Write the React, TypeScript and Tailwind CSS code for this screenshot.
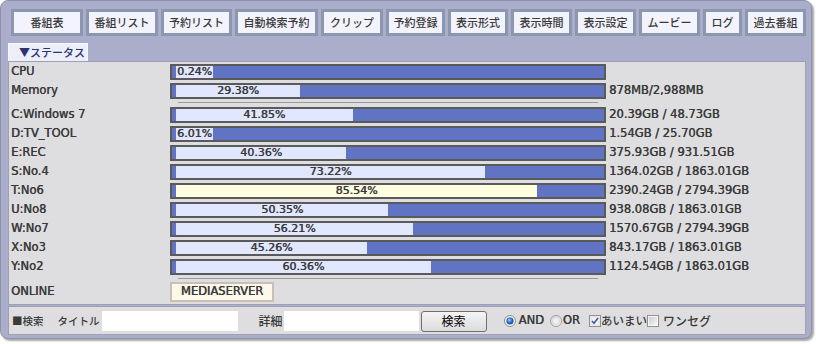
import React from "react";

const LAT = { fontFamily: "'DejaVu Sans', Verdana, sans-serif" } as const;
const JP = { fontFamily: "'Noto Sans CJK JP', sans-serif" } as const;

const NAV: [string, string][] = [
  ["番組表", "w-[72px]"],
  ["番組リスト", "w-[72px]"],
  ["予約リスト", "w-[71px]"],
  ["自動検索予約", "w-[83px]"],
  ["クリップ", "w-[62px]"],
  ["予約登録", "w-[59px]"],
  ["表示形式", "w-[60px]"],
  ["表示時間", "w-[61px]"],
  ["表示設定", "w-[61px]"],
  ["ムービー", "w-[61px]"],
  ["ログ", "w-[39px]"],
  ["過去番組", "w-[61px]"],
];

type Row = { label: string; pct: number; value: string };

const TOP: Row[] = [
  { label: "CPU", pct: 0.24, value: "" },
  { label: "Memory", pct: 29.38, value: "878MB/2,988MB" },
];

const DRIVES: Row[] = [
  { label: "C:Windows 7", pct: 41.85, value: "20.39GB / 48.73GB" },
  { label: "D:TV_TOOL", pct: 6.01, value: "1.54GB / 25.70GB" },
  { label: "E:REC", pct: 40.36, value: "375.93GB / 931.51GB" },
  { label: "S:No.4", pct: 73.22, value: "1364.02GB / 1863.01GB" },
  { label: "T:No6", pct: 85.54, value: "2390.24GB / 2794.39GB" },
  { label: "U:No8", pct: 50.35, value: "938.08GB / 1863.01GB" },
  { label: "W:No7", pct: 56.21, value: "1570.67GB / 2794.39GB" },
  { label: "X:No3", pct: 45.26, value: "843.17GB / 1863.01GB" },
  { label: "Y:No2", pct: 60.36, value: "1124.54GB / 1863.01GB" },
];

function BarRow({ row }: { row: Row }) {
  const warn = row.pct >= 80;
  return (
    <div
      className="flex h-[19px] items-center text-[11.5px] text-[#3a3a3a] [text-shadow:0.4px_0_0_currentColor]"
      style={LAT}
    >
      <div className="w-[160px] pl-[1px] leading-[19px]">{row.label}</div>
      <div className="h-[16px] w-[436px] border-2 border-[#5a5a5a] bg-[#6174c4] pl-[4px]">
        <div
          className={`h-full min-w-fit whitespace-nowrap px-[1px] text-center text-[11px] leading-[12px] ${
            warn ? "bg-[#fffde0]" : "bg-[#e1e7fe]"
          }`}
          style={{ width: `${(row.pct / 100) * 422}px` }}
        >
          {row.pct.toFixed(2)}%
        </div>
      </div>
      <div className="ml-[3px] whitespace-nowrap">{row.value}</div>
    </div>
  );
}

function Sep({ h }: { h: string }) {
  return (
    <div className={`flex ${h} items-center`}>
      <div className="ml-[168px] h-px w-[420px] bg-[#9a9a9a]" />
    </div>
  );
}

function RadioOn() {
  return (
    <svg width="12" height="12" viewBox="0 0 13 13">
      <defs>
        <linearGradient id="rg1" x1="0" y1="0" x2="1" y2="1">
          <stop offset="0" stopColor="#e4e4e4" />
          <stop offset="1" stopColor="#fbfbfb" />
        </linearGradient>
        <radialGradient id="rg2" cx="0.4" cy="0.35" r="0.7">
          <stop offset="0" stopColor="#9fd3ff" />
          <stop offset="0.5" stopColor="#2d7fdc" />
          <stop offset="1" stopColor="#124f9e" />
        </radialGradient>
      </defs>
      <circle cx="6.5" cy="6.5" r="6" fill="url(#rg1)" stroke="#8a8a8a" />
      <circle cx="6.5" cy="6.5" r="3.6" fill="url(#rg2)" stroke="#1d4d8c" strokeWidth="0.6" />
    </svg>
  );
}

function RadioOff() {
  return (
    <svg width="12" height="12" viewBox="0 0 13 13">
      <defs>
        <linearGradient id="rg3" x1="0" y1="0" x2="1" y2="1">
          <stop offset="0" stopColor="#d6d6d6" />
          <stop offset="1" stopColor="#f8f8f8" />
        </linearGradient>
      </defs>
      <circle cx="6.5" cy="6.5" r="6" fill="url(#rg3)" stroke="#9a9a9a" />
      <circle cx="6.5" cy="6.5" r="3.8" fill="#f0f0f0" stroke="#c8c8c8" strokeWidth="0.6" />
    </svg>
  );
}

function CheckOn() {
  return (
    <svg width="12" height="12" viewBox="0 0 13 13">
      <rect x="0.5" y="0.5" width="12" height="12" fill="#fdfdfd" stroke="#8a8a8a" />
      <rect x="2" y="2" width="9" height="9" fill="#f4f4f4" stroke="#d2d2d2" strokeWidth="0.8" />
      <path d="M3.2 6.6 L5.4 9 L9.8 3.2" fill="none" stroke="#3b5a9e" strokeWidth="1.7" />
    </svg>
  );
}

function CheckOff() {
  return (
    <svg width="12" height="12" viewBox="0 0 13 13">
      <defs>
        <linearGradient id="cg1" x1="0" y1="0" x2="1" y2="1">
          <stop offset="0" stopColor="#cfcfcf" />
          <stop offset="1" stopColor="#f6f6f6" />
        </linearGradient>
      </defs>
      <rect x="0.5" y="0.5" width="12" height="12" fill="#fafafa" stroke="#8a8a8a" />
      <rect x="2" y="2" width="9" height="9" fill="url(#cg1)" />
    </svg>
  );
}

export default function App() {
  return (
    <div className="h-[344px] w-[816px] bg-white">
      <div className="w-[812px] rounded-[8px] border border-[#8e92ac] bg-[#aaaecb] pb-[3px] pl-[7px] pr-[4px] pt-[8px] shadow-[2px_2px_2px_rgba(0,0,0,0.35)]">
        {/* nav */}
        <div className="ml-[3px] flex gap-[3px]" style={JP}>
          {NAV.map(([t, w]) => (
            <div
              key={t}
              className={`${w} flex h-[27px] items-center justify-center border-[3px] border-[#8a97ae] bg-[#f2f3fd] text-[11px] font-medium text-[#3a3a3a]`}
            >
              {t}
            </div>
          ))}
        </div>

        {/* tab */}
        <div
          className="mt-[7px] flex h-[18px] w-[80px] items-center border border-b-0 border-[#f6f7ff] bg-[#eceefa] pl-[10px] text-[11px] font-medium text-[#2b3470]"
          style={JP}
        >
          ▼ステータス
        </div>

        {/* status panel */}
        <div className="w-[798px] border border-[#9ea0b6] bg-[#dedee0] pl-[1px]">
          {TOP.map((r) => (
            <BarRow key={r.label} row={r} />
          ))}
          <Sep h="h-[5px]" />
          {DRIVES.map((r) => (
            <BarRow key={r.label} row={r} />
          ))}
          <Sep h="h-[4px]" />
          <div
            className="flex h-[24px] items-center text-[11.5px] text-[#3a3a3a] [text-shadow:0.4px_0_0_currentColor]"
            style={LAT}
          >
            <div className="w-[160px] pl-[1px]">ONLINE</div>
            <div className="flex h-[20px] w-[104px] items-center justify-center border-2 border-[#cac1b6] bg-[#fdf8e9]">
              MEDIASERVER
            </div>
          </div>
        </div>

        {/* search panel */}
        <div
          className="mt-[1px] flex h-[29px] w-[798px] items-center border border-[#9ea0b6] bg-[#dedee0] pl-[3px] pt-[1px] text-[12px] text-[#3a3a3a]"
          style={JP}
        >
          <span className="text-[10.5px] font-medium">■検索</span>
          <span className="ml-[14px] text-[10.5px] font-medium">タイトル</span>
          <div className="ml-[2px] h-[20px] w-[136px] bg-white" />
          <span className="ml-[21px] font-medium">詳細</span>
          <div className="ml-[1px] h-[20px] w-[135px] bg-white" />
          <div className="ml-[2px] flex h-[21px] w-[66px] items-center justify-center rounded-[3px] border border-[#707070] bg-gradient-to-b from-[#f4f4f4] to-[#dcdcdc] text-[12px] text-black">
            検索
          </div>
          <div className="ml-[17px] flex items-center">
            <RadioOn />
          </div>
          <span
            className="ml-[3px] text-[11.5px] [text-shadow:0.4px_0_0_currentColor]"
            style={LAT}
          >
            AND
          </span>
          <div className="ml-[6px] flex items-center">
            <RadioOff />
          </div>
          <span
            className="ml-[1px] text-[11.5px] [text-shadow:0.4px_0_0_currentColor]"
            style={LAT}
          >
            OR
          </span>
          <div className="ml-[9px] flex items-center">
            <CheckOn />
          </div>
          <span className="text-[11.5px] font-medium">あいまい</span>
          <div className="flex items-center">
            <CheckOff />
          </div>
          <span className="ml-[4px] font-medium">ワンセグ</span>
        </div>
      </div>
    </div>
  );
}
